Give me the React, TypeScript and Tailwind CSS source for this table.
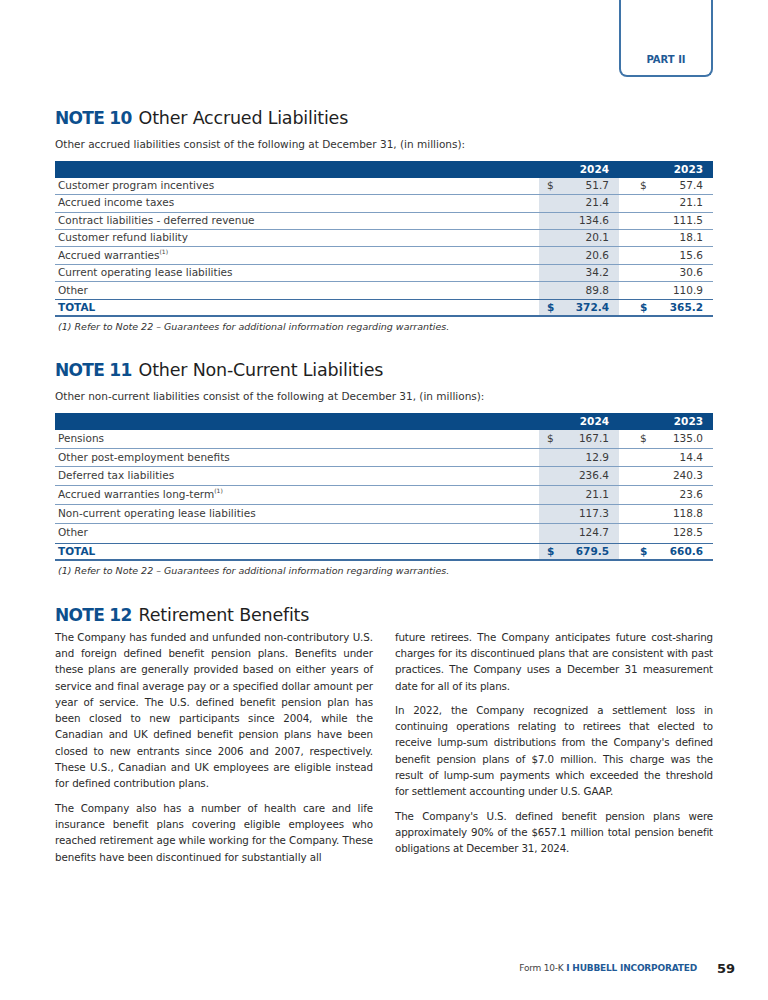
const rows10 = [
  { label: "Customer program incentives", a: "51.7", b: "57.4", dollar: true },
  { label: "Accrued income taxes", a: "21.4", b: "21.1" },
  { label: "Contract liabilities - deferred revenue", a: "134.6", b: "111.5" },
  { label: "Customer refund liability", a: "20.1", b: "18.1" },
  { label: "Accrued warranties", a: "20.6", b: "15.6", note: true },
  { label: "Current operating lease liabilities", a: "34.2", b: "30.6" },
  { label: "Other", a: "89.8", b: "110.9" },
];

const rows11 = [
  { label: "Pensions", a: "167.1", b: "135.0", dollar: true },
  { label: "Other post-employment benefits", a: "12.9", b: "14.4" },
  { label: "Deferred tax liabilities", a: "236.4", b: "240.3" },
  { label: "Accrued warranties long-term", a: "21.1", b: "23.6", note: true },
  { label: "Non-current operating lease liabilities", a: "117.3", b: "118.8" },
  { label: "Other", a: "124.7", b: "128.5" },
];

type Row = { label: string; a: string; b: string; dollar?: boolean; note?: boolean };

function Table({ rows, total, rowH }: { rows: Row[]; total: [string, string]; rowH: string }) {
  return (
    <div className="text-[10.5px]">
      <div className="flex h-[17px] bg-[#0a4a86] text-white font-bold">
        <div className="flex-1" />
        <div className="w-[80px] text-right pr-[10px] leading-[17px]">2024</div>
        <div className="w-[94px] text-right pr-[10px] leading-[17px]">2023</div>
      </div>
      {rows.map((r, i) => (
        <div
          key={r.label}
          className={`flex ${rowH} text-[#3a3a3a] ${i < rows.length - 1 ? "border-b border-[#7f9fc2]" : ""}`}
        >
          <div className="flex-1 flex items-center pl-[3px]">
            {r.label}
            {r.note && <sup className="text-[6px] -top-[4px]">(1)</sup>}
          </div>
          <div className="w-[80px] bg-[#dce3eb] flex items-center justify-between pl-[8px] pr-[10px]">
            <span>{r.dollar ? "$" : ""}</span>
            <span>{r.a}</span>
          </div>
          <div className="w-[94px] flex items-center justify-between pl-[21px] pr-[10px]">
            <span>{r.dollar ? "$" : ""}</span>
            <span>{r.b}</span>
          </div>
        </div>
      ))}
      <div className={`flex ${rowH} border-t border-b-2 border-[#3f6fa2] text-[#0d4f8d] font-bold`}>
        <div className="flex-1 flex items-center pl-[3px]">TOTAL</div>
        <div className="w-[80px] bg-[#dce3eb] flex items-center justify-between pl-[8px] pr-[10px]">
          <span>$</span>
          <span>{total[0]}</span>
        </div>
        <div className="w-[94px] flex items-center justify-between pl-[21px] pr-[10px]">
          <span>$</span>
          <span>{total[1]}</span>
        </div>
      </div>
      <p className="italic text-[9.5px] text-[#333] pl-[3px] mt-[3px]">
        (1) Refer to Note 22 – Guarantees for additional information regarding warranties.
      </p>
    </div>
  );
}

function Heading({ num, title }: { num: string; title: string }) {
  return (
    <h2 className="leading-[22px] flex items-baseline gap-[7px]">
      <span className="text-[17px] font-bold tracking-[-0.7px] text-[#0d4f8d]">{num}</span>
      <span className="text-[17.5px] font-medium tracking-[-0.2px] text-[#1f1f1f]">{title}</span>
    </h2>
  );
}

export default function App() {
  return (
    <div
      className="w-[768px] h-[1000px] bg-white flex flex-col"
      style={{ fontFamily: '"DejaVu Sans", sans-serif' }}
    >
      <div className="flex justify-end pr-[55px]">
        <div className="w-[94px] h-[77px] border-2 border-t-0 border-[#3f74a8] rounded-b-[8px] flex items-end justify-center pb-[8px]">
          <span className="text-[10px] font-bold text-[#1f5a96]">PART II</span>
        </div>
      </div>

      <div className="px-[55px]">
        <div className="mt-[30px]">
          <Heading num="NOTE 10" title="Other Accrued Liabilities" />
          <p className="text-[10.5px] text-[#333] mt-[8px] mb-[8px]">
            Other accrued liabilities consist of the following at December 31, (in millions):
          </p>
          <Table rows={rows10} total={["372.4", "365.2"]} rowH="h-[17.4px]" />
        </div>

        <div className="mt-[25px]">
          <Heading num="NOTE 11" title="Other Non-Current Liabilities" />
          <p className="text-[10.5px] text-[#333] mt-[8px] mb-[8px]">
            Other non-current liabilities consist of the following at December 31, (in millions):
          </p>
          <Table rows={rows11} total={["679.5", "660.6"]} rowH="h-[18.8px]" />
        </div>

        <div className="mt-[25px]">
          <Heading num="NOTE 12" title="Retirement Benefits" />
          <div className="grid grid-cols-2 gap-[22px] mt-[3px] text-[10.3px] leading-[16.3px] text-[#2a2a2a] text-justify">
            <div className="flex flex-col gap-[8px] tracking-[-0.07px]">
              <p>
                The Company has funded and unfunded non-contributory U.S. and foreign defined benefit pension
                plans. Benefits under these plans are generally provided based on either years of service and
                final average pay or a specified dollar amount per year of service. The U.S. defined benefit
                pension plan has been closed to new participants since 2004, while the Canadian and UK defined
                benefit pension plans have been closed to new entrants since 2006 and 2007, respectively. These
                U.S., Canadian and UK employees are eligible instead for defined contribution plans.
              </p>
              <p>
                The Company also has a number of health care and life insurance benefit plans covering eligible
                employees who reached retirement age while working for the Company. These benefits have been
                discontinued for substantially all
              </p>
            </div>
            <div className="flex flex-col gap-[8px] tracking-[-0.15px]">
              <p>
                future retirees. The Company anticipates future cost-sharing charges for its discontinued plans
                that are consistent with past practices. The Company uses a December 31 measurement date for all
                of its plans.
              </p>
              <p>
                In 2022, the Company recognized a settlement loss in continuing operations relating to retirees
                that elected to receive lump-sum distributions from the Company's defined benefit pension plans
                of $7.0 million. This charge was the result of lump-sum payments which exceeded the threshold for
                settlement accounting under U.S. GAAP.
              </p>
              <p>
                The Company's U.S. defined benefit pension plans were approximately 90% of the $657.1 million
                total pension benefit obligations at December 31, 2024.
              </p>
            </div>
          </div>
        </div>
      </div>

      <div className="mt-auto mb-[22px] flex justify-end items-center pr-[33px] gap-[20px]">
        <span className="text-[9px] tracking-[-0.2px] text-[#444]">
          Form 10-K <span className="font-bold text-[#1f5a96]">I HUBBELL INCORPORATED</span>
        </span>
        <span className="text-[13px] font-bold text-[#222]">59</span>
      </div>
    </div>
  );
}
